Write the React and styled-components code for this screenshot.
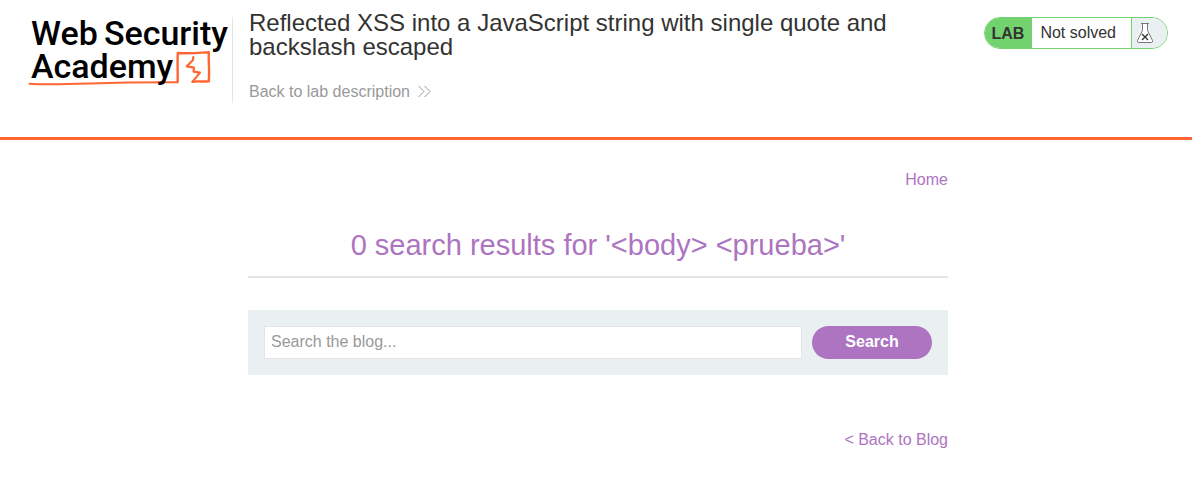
import React from "react";
import styled, { createGlobalStyle } from "styled-components";

const GlobalStyle = createGlobalStyle`
  *, *::before, *::after { box-sizing: border-box; }
  body {
    margin: 0;
    background: #fff;
    color: #333332;
    font-family: "Liberation Sans", Arial, sans-serif;
    font-size: 16px;
    line-height: 24px;
  }
`;

const Header = styled.header`
  display: flex;
  align-items: flex-start;
  padding: 11px 24px 33px;
  border-bottom: 3px solid #ff6633;
`;

const LogoLink = styled.a`
  flex: none;
  margin-top: 6px;
  padding-right: 4px;
  height: 86px;
  border-right: 1px solid #e5e5e5;
`;

const LogoSvg = styled.svg`
  display: block;
  overflow: visible;
  font-family: Roboto, sans-serif;
  font-size: 34px;
  font-weight: 500;
`;

const TitleBlock = styled.div`
  flex: 1;
  min-width: 0;
  padding: 0 16px;
`;

const LabTitle = styled.h2`
  margin: 0 0 21px;
  font-size: 24px;
  line-height: 24px;
  font-weight: 400;
`;

const TextLink = styled.a`
  display: flex;
  width: fit-content;
  align-items: center;
  gap: 8px;
  color: ${(p) => (p.$muted ? "#999" : "#ad74c1")};
  text-decoration: none;
`;

const StatusPill = styled.div`
  flex: none;
  display: flex;
  margin-top: 6px;
  height: 32px;
  line-height: 30px;
  border: 1px solid #72d36e;
  border-radius: 16px;
  overflow: hidden;
`;

const StatusTag = styled.strong`
  padding: 1px 8px 0 7px;
  background: #72d36e;
`;

const StatusText = styled.span`
  padding: 0 15px 0 8px;
`;

const StatusIcon = styled.span`
  display: flex;
  align-items: center;
  width: 36px;
  padding-left: 4px;
  border-left: 1px solid #72d36e;
  background: #eaeff2;
`;

const Main = styled.main`
  max-width: 704px;
  margin: 0 auto;
  padding: 28px 0 28px 4px;
`;

const LinkRow = styled.nav`
  display: flex;
  justify-content: flex-end;
`;

const ResultsHeading = styled.h1`
  margin: 26px 0 32px;
  padding: 10px 0 13px;
  border-bottom: 2px solid #e5e5e5;
  color: #ad74c1;
  font-size: 29px;
  line-height: 35px;
  font-weight: 400;
  text-align: center;
`;

const SearchForm = styled.form`
  display: flex;
  gap: 10px;
  margin-bottom: 53px;
  padding: 16px;
  background: #eaeff2;
`;

const SearchInput = styled.input`
  flex: 1;
  min-width: 0;
  height: 33px;
  padding: 0 6px 2px;
  border: 1px solid #e5e5e5;
  border-radius: 0;
  background: #fff;
  color: #333332;
  font: inherit;
  outline: none;
  &::placeholder { color: #999; opacity: 1; }
`;

const SearchButton = styled.button`
  width: 120px;
  height: 33px;
  padding: 0 0 2px;
  border: 0;
  border-radius: 17px;
  background: #ad74c1;
  color: #fff;
  font: inherit;
  font-weight: 700;
  cursor: pointer;
`;

function Logo() {
  return (
    <LogoSvg width="204" height="72" viewBox="24 17 204 72" role="img" aria-label="Web Security Academy">
      <text x="31" y="45">Web</text>
      <text x="228" y="45" textAnchor="end">Security</text>
      <g fill="none" stroke="#ff6633" strokeLinecap="round" strokeLinejoin="round">
        <path d="M29.500 83.700 C46 84.800 66 84.200 90 83.400 S139 82.100 177.500 82.200" strokeWidth="2" />
        <path d="M177.600 82 C178 73 177.200 64 177.800 53 C188 53.800 199 52.800 208.800 52.300 C208.400 62 209.700 71 208.800 81.400 C203 81.800 197 81 192.500 81.700" strokeWidth="2.400" />
        <path d="M193.300 57 L193 60 L186.800 66.300 L194 67.600 L193.500 71.600 L200 72.600 L192.800 81.400" strokeWidth="2.200" />
      </g>
      <text x="31" y="78">Academy</text>
    </LogoSvg>
  );
}

function Chevrons() {
  return (
    <svg width="14" height="14" viewBox="0 0 14 14" fill="none" stroke="#999" strokeWidth="1" aria-hidden="true">
      <path d="M0.500 1 L6 6.500 L0.500 12 M6.500 1 L12 6.500 L6.500 12" />
    </svg>
  );
}

function Flask() {
  return (
    <svg width="18" height="22" viewBox="0 0 18 22" fill="none" aria-hidden="true">
      <path d="M6.500 1.500 V8.500 L1.500 18.500 Q1 20.500 2.500 20.500 H15.500 Q17 20.500 16.500 18.500 L11.500 8.500 V1.500" fill="#fff" stroke="#777" />
      <path d="M5 1.500 H13" stroke="#777" />
      <path d="M6 12 L12 18 M12 12 L6 18" stroke="#333" strokeWidth="1.400" />
    </svg>
  );
}

export default function App() {
  return (
    <>
      <GlobalStyle />
      <Header>
        <LogoLink href="#academy"><Logo /></LogoLink>
        <TitleBlock>
          <LabTitle>Reflected XSS into a JavaScript string with single quote and backslash escaped</LabTitle>
          <TextLink href="#description" $muted>
            Back to lab description
            <Chevrons />
          </TextLink>
        </TitleBlock>
        <StatusPill>
          <StatusTag>LAB</StatusTag>
          <StatusText>Not solved</StatusText>
          <StatusIcon><Flask /></StatusIcon>
        </StatusPill>
      </Header>
      <Main>
        <LinkRow><TextLink href="#home">Home</TextLink></LinkRow>
        <ResultsHeading>{"0 search results for '<body> <prueba>'"}</ResultsHeading>
        <SearchForm onSubmit={(e) => e.preventDefault()}>
          <SearchInput type="text" name="search" aria-label="Search the blog" placeholder="Search the blog..." />
          <SearchButton type="submit">Search</SearchButton>
        </SearchForm>
        <LinkRow><TextLink href="#blog">{"< Back to Blog"}</TextLink></LinkRow>
      </Main>
    </>
  );
}
